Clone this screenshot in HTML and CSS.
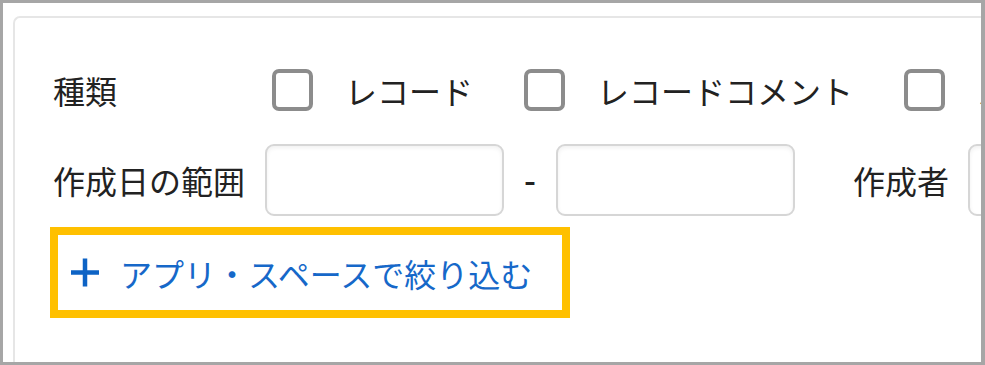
FILE: index.html
```html
<!DOCTYPE html>
<html lang="ja">
<head>
<meta charset="utf-8">
<link rel="stylesheet" href="styles.css">
</head>
<body>
<div class="frame">
  <div class="panel">
    <div class="row row-type">
      <span class="label label-type">種類</span>
      <label class="option"><span class="box"></span><span class="opt-text">レコード</span></label>
      <label class="option"><span class="box"></span><span class="opt-text">レコードコメント</span></label>
      <label class="option"><span class="box"></span><span class="opt-text">スペース</span></label>
    </div>
    <div class="row row-date">
      <span class="label label-date">作成日の範囲</span>
      <span class="field"></span>
      <span class="dash">-</span>
      <span class="field"></span>
      <span class="label label-creator">作成者</span>
      <span class="field"></span>
    </div>
    <div class="highlight">
      <a class="add-link" href="#">
        <svg class="plus" viewBox="0 0 32 32" width="32" height="33"><path d="M16 2v28M2 16h28" stroke="currentColor" stroke-width="4.5" fill="none"/></svg>
        <span>アプリ・スペースで絞り込む</span>
      </a>
    </div>
  </div>
</div>
</body>
</html>
```

FILE: styles.css
```css
* { box-sizing: border-box; }
html, body { margin: 0; padding: 0; background: #fff; }
body {
  font-family: "Noto Sans CJK JP", "Noto Sans", sans-serif;
  color: #222;
}
.frame {
  width: 985px;
  height: 365px;
  border: 3px solid #a6a6a6;
  border-right-width: 4px;
  overflow: hidden;
  background: #fff;
}
.panel {
  width: 1300px;
  height: 600px;
  margin: 13px 0 0 10px;
  border-top: 2px solid #e6e6e6;
  border-left: 2px solid #e6e6e6;
  border-top-left-radius: 7px;
  padding: 51px 0 0 38px;
  white-space: nowrap;
}
.row {
  display: flex;
  align-items: center;
  font-size: 32px;
  line-height: 1;
}
.row-type { height: 42px; }
.label-type { width: 219px; }
.option {
  display: flex;
  align-items: center;
  margin-right: 51px;
}
.box {
  width: 41px;
  height: 42px;
  border: 4px solid #8c8c8c;
  border-radius: 7px;
  background: #fff;
}
.opt-text { margin-left: 32px; }
.row-date {
  margin-top: 33px;
  height: 72px;
}
.label-date { width: 212px; }
.field {
  width: 239px;
  height: 72px;
  border: 2px solid #d6d6d6;
  border-radius: 9px;
  background: #fff;
  box-shadow: inset 0 2px 4px rgba(0, 0, 0, 0.06);
}
.dash {
  width: 52px;
  text-align: center;
  font-family: "Liberation Sans", sans-serif;
  font-size: 36px;
  position: relative;
  top: 1px;
}
.label-creator { margin-left: 58px; width: 115px; }
.highlight {
  margin: 11px 0 0 -3px;
  width: 520px;
  height: 91px;
  border: 8px solid #ffc000;
  display: flex;
  align-items: center;
  padding-left: 11px;
}
.add-link {
  display: flex;
  align-items: center;
  color: #1668c9;
  text-decoration: none;
  font-size: 32px;
  line-height: 1;
}
.plus { color: #0d63c5; margin-right: 19px; }
```
